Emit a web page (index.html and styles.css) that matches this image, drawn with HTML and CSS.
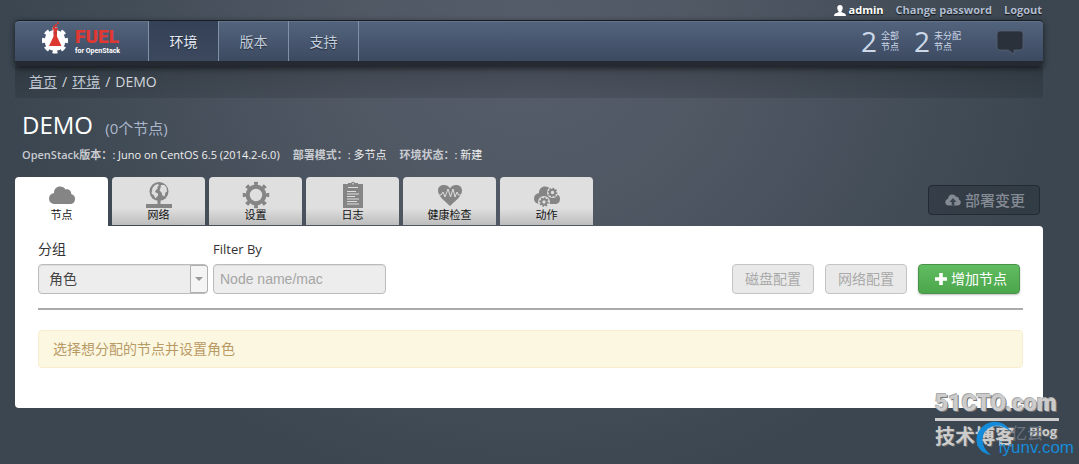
FILE: index.html
```html
<!DOCTYPE html>
<html lang="zh-CN">
<head>
<meta charset="utf-8">
<title>Fuel for OpenStack</title>
<link rel="stylesheet" href="styles.css">
</head>
<body>
<div class="page">
  <div class="user-bar">
    <span class="user">
      <svg class="user-icon" viewBox="0 0 12 11"><path d="M6 0C8 0 8.900 1.300 8.700 3.200 8.600 4.700 8 5.600 7.500 6v1.200l3.300 1.300Q12 9 12 11H0Q0 9 1.200 8.500L4.500 7.200V6C4 5.600 3.400 4.700 3.300 3.200 3.100 1.300 4 0 6 0z" fill="#fff"/></svg>
      admin</span>
    <a href="#">Change password</a>
    <a href="#">Logout</a>
  </div>

  <header class="navbar">
    <a class="brand" href="#">
      <svg class="brand-icon" viewBox="0 0 27 33">
        <circle cx="13" cy="19.500" r="10.500" fill="#fff"/>
        <circle cx="13" cy="19.500" r="11.300" fill="none" stroke="#fff" stroke-width="3.400" pathLength="16" stroke-dasharray="1.100 .9" stroke-dashoffset=".55"/>
        <path d="M10.500 7h5.500v1.500h-1v7l4.500 9.500H7l4.500-9.500v-7h-1z" fill="#dc3730"/>
        <path d="M11.500 12h3.500" stroke="#973f43"/>
        <path d="M11 4.500h2V3h2v3h-2v1h-2zM15 1h2v2h-2z" fill="#c83b3d"/>
      </svg>
      <span class="brand-text"><b>FUEL</b><small>for OpenStack</small></span>
    </a>
    <nav class="nav">
      <a class="current" href="#">环境</a>
      <a href="#">版本</a>
      <a href="#">支持</a>
    </nav>
    <div class="stats">
      <div class="stat"><strong>2</strong><span>全部<br>节点</span></div>
      <div class="stat"><strong>2</strong><span>未分配<br>节点</span></div>
    </div>
    <button class="notices" type="button" aria-label="Notifications">
      <svg viewBox="0 0 28 25"><path d="M4 1h20q3 0 3 3v13q0 3-3 3h-6v4l-6-4H4q-3 0-3-3V4q0-3 3-3z" fill="#2b313b" stroke="#596477" stroke-width=".7"/></svg>
    </button>
  </header>
  <div class="breadcrumb"><a href="#">首页</a><span>/</span><a href="#">环境</a><span>/</span>DEMO</div>

  <main>
    <h1>DEMO <small>(0个节点)</small></h1>
    <div class="meta">
      <span><b>OpenStack版本：</b>: Juno on CentOS 6.5 (2014.2-6.0)</span>
      <span><b>部署模式：</b>: 多节点</span>
      <span><b>环境状态：</b>: 新建</span>
    </div>
    <div class="tab-row">
      <nav class="tabs">
        <a class="tab active" href="#">
          <svg viewBox="0 0 28 28"><path d="M7 23C3 23 1 20.500 1 17.500S3 12.500 6 12C6 8 8.500 5.500 12 5.500c2.500 0 4.500 1 5.500 3 3-.800 6 1.500 5.700 4.500 2.500.500 3.800 2.500 3.800 4.700C27 21 25 23 22 23z"/></svg>
          节点</a>
        <a class="tab" href="#">
          <svg viewBox="0 0 28 28"><circle cx="14" cy="10.500" r="9.500"/><path class="light" d="M7.500 7l2.500-3 3-1 1 1.500-2 1.500 1 1-2 2-1 2 3 1.500v2L10.500 17.500l-1.500-3-2.500-2zM16 4l3.500 0 2 2.500.5 4-1.500 1-1 4-2-1-1-3-2-2 1-2.500z"/><path d="M12.500 19h3v4h-3zM1 23h26v4H1z"/></svg>
          网络</a>
        <a class="tab" href="#">
          <svg viewBox="0 0 28 28"><circle class="ring" cx="14" cy="14" r="8.300" stroke-width="4.200"/><circle class="ring" cx="14" cy="14" r="11.500" stroke-width="3.500" pathLength="16" stroke-dasharray=".85 1.150" stroke-dashoffset=".425"/></svg>
          设置</a>
        <a class="tab" href="#">
          <svg viewBox="0 0 28 28"><path d="M4 3h5v4h10V3h5v24H4z"/><path d="M9 2h3q2-2.500 4 0h3v4H9z"/><path class="line" d="M9 6.500h10M8 10.500h9M8 13h12M8 15.500h8M8 18h12M8 20.500h10M8 23h12"/><circle class="light" cx="14" cy="2.800" r=".8"/></svg>
          日志</a>
        <a class="tab" href="#">
          <svg viewBox="0 0 28 28"><path d="M14 25C9 20 2 15.500 2 9.500 2 5.500 5 4 8 4s5 1.500 6 3.500C15 5.500 17 4 20 4s6 1.500 6 5.500C26 15.500 19 20 14 25z"/><path class="line" d="M2 14h3l2-3 2 5 3-8 2.500 8L17 8l2 8 2-5 1.500 3H26"/></svg>
          健康检查</a>
        <a class="tab" href="#">
          <svg viewBox="0 0 28 28"><path d="M7 23C3 23 1 20.500 1 17.500S3 12.500 6 12C6 8 8.500 5.500 12 5.500c2.500 0 4.500 1 5.500 3 3-.800 6 1.500 5.700 4.500 2.500.500 3.800 2.500 3.800 4.700C27 21 25 23 22 23z"/><circle class="light" cx="11" cy="21" r="6"/><circle class="light" cx="19.500" cy="11.500" r="5.500"/><circle class="ring" cx="11" cy="21" r="2.700" stroke-width="2"/><circle class="ring" cx="11" cy="21" r="4.100" stroke-width="1.500" pathLength="16" stroke-dasharray="1 1"/><circle class="ring" cx="19.500" cy="11.500" r="2.700" stroke-width="2"/><circle class="ring" cx="19.500" cy="11.500" r="4.100" stroke-width="1.500" pathLength="16" stroke-dasharray="1 1"/></svg>
          动作</a>
      </nav>
      <button class="deploy" type="button" disabled>
        <svg viewBox="0 0 16 12"><path d="M4 11.500C1.500 11.500.3 10 .3 8.200S1.500 5.300 3 5C3 2.300 4.800.5 7.200.5c1.800 0 3 .800 3.800 2.300 1.700-.200 3 1 2.900 2.600 1.300.5 1.900 1.600 1.900 2.800 0 2-1.500 3.300-3.500 3.300z" fill="#858b93"/><path d="M8 4l3.500 4H9.300v3.500H6.700V8H4.500z" fill="#3b454f"/></svg>
        部署变更</button>
    </div>

    <section class="panel">
      <div class="toolbar">
        <div class="field grouping">
          <label for="grouping">分组</label>
          <div class="select-box">
            <select id="grouping"><option>角色</option></select>
            <span class="select-arrow"></span>
          </div>
        </div>
        <div class="field filter">
          <label for="filter">Filter By</label>
          <input id="filter" type="text" placeholder="Node name/mac">
        </div>
        <div class="actions">
          <button class="btn" type="button" disabled>磁盘配置</button>
          <button class="btn" type="button" disabled>网络配置</button>
          <button class="btn add" type="button">
            <svg viewBox="0 0 12 12"><path d="M4.200 0h3.600v4.200H12v3.600H7.800V12H4.200V7.800H0V4.200h4.200z" fill="#fff"/></svg>
            增加节点</button>
        </div>
      </div>
      <div class="alert">选择想分配的节点并设置角色</div>
    </section>
  </main>
</div>

<div class="watermark">
  <div class="wm-name">51CTO.com</div>
  <div class="wm-sub"><span>技术博客</span><i>Blog</i></div>
  <svg class="wm-swirl" viewBox="0 0 40 40"><path d="M37 13C33 3 18-1 8 8-3 18 0 35 17 38 8 31 5 21 11 13c6-8 18-8 26 0z" fill="#148bd8"/><path d="M36 13C28 4 15 5 9 16 14 7 26 4 36 13z" fill="#8cc8ef"/></svg>
  <div class="wm-cloud">亿云</div>
  <div class="wm-site">iyunv.com</div>
</div>
</body>
</html>
```
FILE: styles.css
```css
* { box-sizing: border-box; }

body {
  margin: 0;
  min-height: 100vh;
  position: relative;
  font-family: "Open Sans", "Noto Sans CJK SC", sans-serif;
  font-size: 14px;
  line-height: 20px;
  color: #333;
  background: radial-gradient(ellipse 520px 440px at 49% 12%, #565d6a 0%, #505864 35%, #3b4650 100%) #3b4650;
}

button, input, select { font: inherit; margin: 0; }
a { color: inherit; text-decoration: none; }

.page { padding: 0 36px 0 15px; }

.user-bar {
  display: flex;
  justify-content: flex-end;
  gap: 12px;
  padding-right: 1px;
  font-size: 11px;
  font-weight: 700;
  color: #b1bdd1;
  text-shadow: 0 1px 1px #111;
}
.user { display: flex; align-items: center; gap: 3px; color: #fff; }
.user-icon { width: 12px; height: 11px; }

.navbar {
  position: relative;
  display: flex;
  height: 46px;
  border-top: 1px solid #171d25;
  border-bottom: 5px solid #252a32;
  border-radius: 4px;
  background: linear-gradient(#53647d, #3c4a61);
  box-shadow: 0 2px 6px rgba(0, 0, 0, .6), inset 0 1px 0 #63728a;
}
.brand { display: flex; width: 133px; padding-left: 27px; gap: 6px; }
.brand-icon { width: 27px; height: 33px; }
.brand-text { display: flex; flex-direction: column; padding-top: 6px; }
.brand-text b {
  font: 900 19px/20px Roboto, sans-serif;
  color: #e03832;
}
.brand-text small {
  font: bold 7px/8px Roboto, "Open Sans", sans-serif;
  color: #fff;
  white-space: nowrap;
}
.nav { display: flex; }
.nav a {
  width: 70px;
  border-left: 1px solid #8290a6;
  line-height: 42px;
  text-align: center;
  color: #c3cddc;
  text-shadow: 0 1px 1px #222b38;
}
.nav a.current { background: linear-gradient(#344156, #3b485d); color: #e3e9f2; }
.nav::after { content: ""; border-left: 1px solid #8290a6; }
.stats { display: flex; align-items: center; gap: 15px; margin-left: auto; color: #ccd8e8; }
.stat { display: flex; align-items: center; gap: 4px; }
.stat strong { font-size: 28px; font-weight: 400; line-height: 38px; }
.stat span { font-size: 9px; line-height: 11px; }
.notices {
  width: 28px;
  margin: 0 19px 0 35px;
  padding: 3px 0 0;
  border: 0;
  background: none;
}
.notices svg { display: block; width: 28px; height: 25px; }

.breadcrumb {
  display: flex;
  gap: 5px;
  padding: 6px 14px;
  background: linear-gradient(rgba(20, 24, 28, .28), rgba(20, 24, 28, .14));
  color: #d3d6da;
}
.breadcrumb a { text-decoration: underline; color: #bdc4ce; }

h1 {
  margin: 10px 0 0 7px;
  font-size: 24px;
  font-weight: 400;
  line-height: 34px;
  color: #fff;
}
h1 small { font-size: 15px; margin-left: 6px; color: #abb7cb; }
.meta {
  display: flex;
  gap: 13px;
  margin: 5px 7px 0;
  font-size: 11px;
  line-height: 16px;
  color: #eee;
}
h1 + .meta { margin-top: 2px; }
.meta b { font-weight: 600; color: #c8cbd0; }

.tab-row { display: flex; align-items: flex-end; justify-content: space-between; margin-top: 14px; }
.tabs { display: flex; gap: 4px; }
.tab {
  display: flex;
  flex-direction: column;
  align-items: center;
  width: 93px;
  height: 48px;
  margin-bottom: 1px;
  padding-top: 4px;
  border-radius: 4px 4px 0 0;
  background: linear-gradient(#dfdfdf 65%, #bdbdbd);
  color: #111;
  font-size: 11px;
  line-height: 12px;
}
.tab.active { height: 49px; margin-bottom: 0; background: #fff; }
.tab svg { width: 28px; height: 28px; fill: #858585; }
.tab .light { fill: #dedede; }
.tab .ring { fill: none; stroke: #858585; }
.tab .line { fill: none; stroke: #dedede; stroke-width: 1; }
.deploy {
  display: flex;
  align-items: center;
  justify-content: center;
  gap: 4px;
  height: 30px;
  margin: 0 3px 11px 0;
  padding: 0 14px 0 16px;
  border: 1px solid #222a34;
  border-radius: 4px;
  background: rgba(38, 45, 53, .4);
  color: #858b94;
  font-size: 15px;
  font-weight: 500;
}
.deploy svg { width: 16px; height: 12px; }

.panel {
  padding: 13px 20px 40px 23px;
  border-radius: 0 4px 4px 4px;
  background: #fff;
}
.toolbar {
  display: flex;
  align-items: flex-end;
  gap: 5px;
  padding-bottom: 14px;
  border-bottom: 2px solid #aaa;
}
.field { display: flex; flex-direction: column; gap: 5px; }
.filter label { font-size: 13px; }
.grouping { width: 170px; }
.filter { width: 173px; }
.select-box { position: relative; }
.select-box select, .filter input {
  display: block;
  width: 100%;
  height: 30px;
  border: 1px solid #bbb;
  border-radius: 4px;
  background: #ededed;
  box-shadow: inset 0 1px 1px rgba(0, 0, 0, .07);
}
.select-box select { appearance: none; padding: 0 22px 0 10px; color: #444; }
.select-arrow {
  position: absolute;
  top: 1px;
  right: 0;
  bottom: 1px;
  width: 18px;
  display: grid;
  place-items: center;
  border: 1px solid #b0b0b0;
  border-radius: 0 3px 3px 0;
  background: #f4f4f4;
  pointer-events: none;
}
.select-arrow::after {
  content: "";
  border: 4px solid transparent;
  border-top-color: #999;
  border-bottom: 0;
}
.filter input { padding: 0 6px; font-family: "Liberation Sans", sans-serif; }
.filter input::placeholder { color: #a5a5a5; }
.actions { display: flex; gap: 11px; margin: 0 3px 0 auto; }
.btn {
  display: flex;
  align-items: center;
  gap: 4px;
  height: 30px;
  padding: 0 12px;
  border: 1px solid #c4c4c4;
  border-radius: 4px;
  background: #e9e9e9;
  color: #aaa;
  white-space: nowrap;
}
.btn.add {
  padding: 0 12px 0 16px;
  border-color: #499249;
  background: linear-gradient(#61bd61, #4ca64c);
  color: #fff;
  box-shadow: 0 1px 2px rgba(0, 0, 0, .25);
}
.btn svg { width: 12px; height: 12px; }
.alert {
  margin-top: 20px;
  padding: 9px 14px;
  border: 1px solid #f8ecce;
  border-radius: 4px;
  background: #fcf7e1;
  color: #b89a65;
  line-height: 18px;
}

.watermark {
  position: absolute;
  right: 4px;
  bottom: 6px;
  width: 140px;
  height: 68px;
  color: #ccc;
}
.wm-name {
  width: 124px;
  border-bottom: 3px solid #ccc;
  font: 900 23px/28px Roboto, sans-serif;
  text-shadow: 1px 1px 0 #777, -1px -1px 0 #aaa;
}
.wm-sub {
  display: flex;
  gap: 14px;
  width: 126px;
  font-size: 20px;
  font-weight: 700;
  line-height: 32px;
  text-shadow: 1px 1px 0 #666;
}
.wm-sub i { font-size: 13px; line-height: 20px; font-style: normal; }
.wm-swirl { position: absolute; left: 40px; top: 28px; width: 38px; height: 40px; }
.wm-cloud { position: absolute; left: 76px; top: 34px; color: #6c7481; font-size: 16px; line-height: 18px; }
.wm-site {
  position: absolute;
  right: 1px;
  bottom: 0;
  color: #168bd9;
  font: 17px/20px "Liberation Sans", sans-serif;
}
```
